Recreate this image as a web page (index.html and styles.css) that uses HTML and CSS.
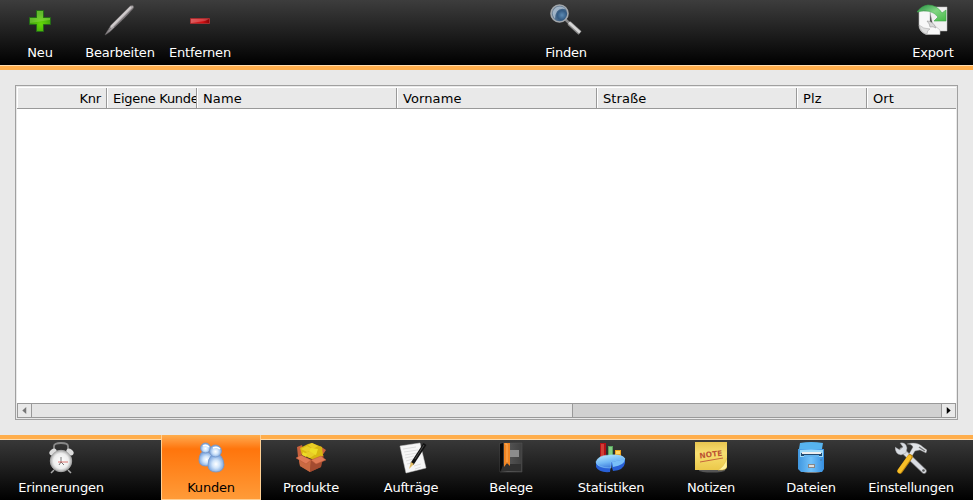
FILE: index.html
```html
<!DOCTYPE html>
<html lang="de">
<head>
<meta charset="utf-8">
<title>Kunden</title>
<link rel="stylesheet" href="styles.css">
</head>
<body>
<header class="toolbar">
  <button class="tool"><svg viewBox="0 0 32 32"><defs><radialGradient id="green" cx=".55" cy=".65"><stop stop-color="#65da08"/><stop offset="1" stop-color="#40a10c"/></radialGradient></defs><path d="M12.5 6.5h7v7h7v7h-7v7h-7v-7h-7v-7h7z" fill="url(#green)" stroke="#246b16"/><path d="M13 7h6v7h7v2l-20 3v-5h7z" fill="#b4ed78" opacity=".3"/></svg><span>Neu</span></button>
  <button class="tool"><svg viewBox="0 0 32 32"><path d="M1 31L7 21 26 2q3-2 4 1-1 3-20 21-5 5-9 7z" fill="#a8a4a6" stroke="#575456" stroke-width=".7"/><path d="M7 23L27 3" stroke="#d0cccd" stroke-width="1.8"/><path d="M2 30l5-6M10 23L29 4" stroke="#817b7e"/></svg><span>Bearbeiten</span></button>
  <button class="tool"><svg viewBox="0 0 32 32"><defs><linearGradient id="red"><stop stop-color="#d33132"/><stop offset=".65" stop-color="#d00c10"/><stop offset="1" stop-color="#850507"/></linearGradient></defs><path d="M6.5 14.5h19v5h-19z" fill="url(#red)" stroke="#a62c2e"/><path d="M7 15h18l-4 2-14 2z" fill="#fff" opacity=".22"/></svg><span>Entfernen</span></button>
  <button class="tool find"><svg viewBox="0 0 32 32"><defs><radialGradient id="lens" cx=".65" cy=".6" r=".6"><stop stop-color="#5d8bb4"/><stop offset=".45" stop-color="#345b83"/><stop offset="1" stop-color="#6c8296"/></radialGradient></defs><path d="M15 15l5 5" stroke="#888" stroke-width="2.5"/><path d="M19 19l11 10" stroke="#888" stroke-width="4.5"/><path d="M19 18.500l11 10" stroke="#d6d6d6" stroke-width="2.500"/><circle cx="9.500" cy="9.500" r="8.500" fill="url(#lens)" stroke="#a2a7ac" stroke-width="1.600"/><path d="M5 15Q0 8 6 3.500q6-3 10 2-6-2-9 2-2 3-2 7.500z" fill="#b9cad9" opacity=".75"/></svg><span>Finden</span></button>
  <button class="tool export"><svg viewBox="0 0 32 32"><defs><linearGradient id="arrow" x2="1" y2="1"><stop stop-color="#208b40"/><stop offset=".5" stop-color="#82d683"/><stop offset="1" stop-color="#46b847"/></linearGradient></defs><path d="M12 3h18v24H17z" fill="#f0f0f0" stroke="#bbb" stroke-width=".5"/><path d="M2 7h11v11l10 8v4.500H9q-7-3-7-9z" fill="#f8f8f8" stroke="#bbb" stroke-width=".6"/><path d="M10 17q6 0 9 7-3-2-6-1 0-3-3-6z" fill="#d8d8d8" stroke="#999" stroke-width=".6"/><path d="M2 21q2 8 8 9 0-4 3-5-7 0-11-4z" fill="#e0e0e0" stroke="#aaa" stroke-width=".6"/><path d="M0 8Q4 2 11 1q9 0 14 8l4-3v11H17l4-4Q14 4 0 8z" fill="url(#arrow)" stroke="#3eaa4b" stroke-width=".6"/></svg><span>Export</span></button>
</header>
<main class="content">
  <section class="table">
    <div class="head">
      <div class="col right">Knr</div><div class="col clip">Eigene Kunde</div><div class="col wide">Name</div><div class="col wide">Vorname</div><div class="col wide">Straße</div><div class="col plz">Plz</div><div class="col last">Ort</div>
    </div>
    <div class="rows"></div>
    <div class="scroll">
      <div class="step"><svg viewBox="0 0 5 8"><path d="M4.500 0v8L0 4z" fill="#777"/></svg></div>
      <div class="track"></div><div class="thumb"></div>
      <div class="step end"><svg viewBox="0 0 5 8"><path d="M.5 0v8L5 4z" fill="#000"/></svg></div>
    </div>
  </section>
</main>
<nav class="tabs">
  <a class="tab first"><svg viewBox="0 0 32 32"><defs><radialGradient id="clock"><stop stop-color="#fff"/><stop offset=".7" stop-color="#eee"/><stop offset="1" stop-color="#aaa"/></radialGradient></defs><path d="M9 8V4q0-3 7-3t7 3v4" fill="none" stroke="#888" stroke-width="1.8"/><path d="M9 28l-3 3m17-3l3 3" stroke="#aaa" stroke-width="1.5"/><ellipse cx="8" cy="10" rx="4" ry="2.8" transform="rotate(-38 8 10)" fill="#ddd"/><ellipse cx="25" cy="10" rx="4" ry="2.8" transform="rotate(38 25 10)" fill="#ddd"/><circle cx="16" cy="19" r="10.7" fill="url(#clock)" stroke="#aaa"/><path d="M16 15v5l3 3m-3-3l-2 3" fill="none" stroke="#777"/><path d="M13 20h10" stroke="#d65752" stroke-width=".8"/></svg><span>Erinnerungen</span></a>
  <a class="tab active"><svg viewBox="0 0 32 32"><defs><radialGradient id="person" cx=".5" cy=".55"><stop stop-color="#fff"/><stop offset=".45" stop-color="#d2e6fb"/><stop offset="1" stop-color="#7ea7df"/></radialGradient></defs><g fill="url(#person)" stroke="#7297cb" stroke-width=".8"><path d="M6 11q5-3 9 0 4 4 4 8-1 5-8 5-7 0-7-6 0-4 2-7z"/><circle cx="10.500" cy="6" r="5"/><path d="M16 14q5-3 10 0 3 4 3 9-1 7-8 7-8 0-8-7 0-6 3-9z"/><circle cx="20.500" cy="9" r="6"/></g><path d="M8 4q3-2 6 1M18 6q4-2 7 1" stroke="#fff" stroke-width="1.500" fill="none"/></svg><span>Kunden</span></a>
  <a class="tab"><svg viewBox="0 0 32 32"><path d="M3 13l14 5 12-5-3 12-11 5-10-6z" fill="#9c482c"/><path d="M3 13l13 5-1 12-10-6z" fill="#c96a42"/><path d="M16 18l11-5-1 12-11 5z" fill="#a34b30"/><path d="M2 5l5-2 2 8-6 4zM25 4l6 4-4 6z" fill="#c9613c"/><path d="M5 6l8-4 4-1 10 4 1 9-9 4-12-5z" fill="#d8b711"/><path d="M6 7l6-3 6 3-6 3zM13 3l4-2 6 3-5 3zM8 12l7-3 6 3-6 4z" fill="#e9cd27"/><path d="M14 9l2-3 7 1-2 6zM8 10l4 2-1 3-4-2z" fill="#eddd27"/><path d="M1 16l5-3 10 5-5 4zM16 18l10-4 5 4-10 4z" fill="#e07b57" stroke="#b95737" stroke-width=".5"/></svg><span>Produkte</span></a>
  <a class="tab"><svg viewBox="0 0 32 32"><path d="M5 4L25 1l6 25-20 5z" fill="#f6f6f6" stroke="#ccc" stroke-width=".5"/><path d="M8 7l13-2M9 10l14-2M10 13l12-2M10 16l9-2M11 19l7-2M12 22l5-1M19 24l7-2M20 27l6-2" stroke="#d2d2d2" stroke-width=".7"/><path d="M30 2L17 22" stroke="#111" stroke-width="3.500"/><path d="M29 3L20 17" stroke="#666" stroke-width=".7"/><path d="M16 20l3 2-5 5z" fill="#e1bb63"/></svg><span>Aufträge</span></a>
  <a class="tab"><svg viewBox="0 0 32 32"><defs><linearGradient id="book"><stop stop-color="#222"/><stop offset=".35" stop-color="#555"/><stop offset="1" stop-color="#3f3f3f"/></linearGradient></defs><path d="M5 1h22v29H5z" fill="url(#book)" stroke="#555" stroke-width=".5"/><path d="M5 2l3-1v23l-3 6z" fill="#090909"/><path d="M8 22h18v7H7z" fill="#303030"/><path d="M13 8h11v7H13z" fill="#8c8c8c"/><path d="M9 1h6v23l-3-3-3 4z" fill="#ef8524"/><path d="M10 2h2v18" stroke="#ffaf58" fill="none"/></svg><span>Belege</span></a>
  <a class="tab"><svg viewBox="0 0 32 32"><defs><linearGradient id="pie" y2="1" x2=".4"><stop stop-color="#bfeaff"/><stop offset=".6" stop-color="#72b8f5"/><stop offset="1" stop-color="#3d7bdd"/></linearGradient></defs><path d="M5 1h6v19H5z" fill="#b31118"/><path d="M6 2h3v15H6z" fill="#d03e35"/><path d="M13 4h5v14h-5z" fill="#59a35e"/><path d="M14 5h3v11h-3z" fill="#83ce83"/><path d="M20 8h6v9h-6z" fill="#f0a319"/><path d="M21 9h4v3h-4z" fill="#ffd565"/><path d="M1 19v6q3 6 14 5l1-8 2 7q11-1 12-8v-5z" fill="#2860d6"/><path d="M1 20Q3 13 15 13q13-1 15 4L16 20v6Q2 26 1 20z" fill="url(#pie)" stroke="#94d7ff" stroke-width=".5"/><path d="M17 20l13-3q0 6-12 8z" fill="#78bff8"/></svg><span>Statistiken</span></a>
  <a class="tab"><svg viewBox="0 0 32 32"><defs><linearGradient id="note" x2="0" y2="1"><stop stop-color="#e8c550"/><stop offset=".4" stop-color="#f8df71"/><stop offset="1" stop-color="#ebc84a"/></linearGradient></defs><ellipse cx="17" cy="28.500" rx="13" ry="2" fill="#555"/><path d="M0 0h32v23l-5 5H0z" fill="url(#note)"/><path d="M23 28q6-3 9-12v9q-1 3-5 3z" fill="#fff09b" stroke="#dcb940" stroke-width=".5"/><text x="4.500" y="15" transform="rotate(-7 16 13)" class="note-text">NOTE</text><path d="M5 20l23-4" stroke="#c6663d" stroke-width="1"/></svg><span>Notizen</span></a>
  <a class="tab"><svg viewBox="0 0 32 32"><defs><linearGradient id="drawer"><stop stop-color="#3f96df"/><stop offset=".5" stop-color="#72c2fa"/><stop offset="1" stop-color="#378fe0"/></linearGradient></defs><ellipse cx="17" cy="29" rx="10" ry="2" fill="#777"/><path d="M5 1Q16-1 28 1l-1 6H4z" fill="#57b4ef"/><path d="M3 7h26v20l-2 3H6l-3-3z" fill="url(#drawer)"/><path d="M5 8h23v7H5z" fill="#9cdafa"/><path d="M6 11h21v3H6z" fill="#234a70"/><path d="M7 10h19v2H7z" fill="#eee"/><path d="M9 13h15v2H9z" fill="#63b4ee"/><path d="M13 22h7v4h-7z" fill="#888"/><path d="M14 23h5v2h-5z" fill="#ddd"/><path d="M26 17v2" stroke="#4778a0"/></svg><span>Dateien</span></a>
  <a class="tab"><svg viewBox="0 0 32 32"><path d="M7 8l22 21" stroke="#777" stroke-width="5.500" stroke-linecap="round"/><path d="M7 8l22 21" stroke="#dadde3" stroke-width="4" stroke-linecap="round"/><path d="M0 5l5 3 3-3-3-4q6-1 7 5l-1 5-5 2Q0 12 0 5z" fill="#d8dce2" stroke="#888" stroke-width=".4"/><circle cx="28.500" cy="28.500" r="1.300" fill="#555"/><path d="M12 2q10-3 16 3l4 3-1 3-6-3-5 1-3 5-3-2 4-7q-1-3-6-3z" fill="#e2e4e8" stroke="#888" stroke-width=".4"/><path d="M24 5l6 4" stroke="#777" stroke-width="1.500"/><path d="M15 15L5 29" stroke="#bc850e" stroke-width="5.500" stroke-linecap="round"/><path d="M14.500 15L4.500 29" stroke="#f8bf28" stroke-width="4" stroke-linecap="round"/></svg><span>Einstellungen</span></a>
</nav>
</body>
</html>
```
FILE: styles.css
```css
* { box-sizing: border-box; }
body {
  margin: 0;
  width: 973px;
  height: 500px;
  display: flex;
  flex-direction: column;
  overflow: hidden;
  background: #e9e9e9;
  color: #000;
  font: 13px/16px "DejaVu Sans", sans-serif;
  letter-spacing: -0.2px;
}
svg { display: block; flex: none; }
.toolbar {
  height: 70px;
  flex: none;
  display: flex;
  background: linear-gradient(#3d3d3d, #000) 0 0 / 100% 65px no-repeat #ffae4c;
  border-bottom: 4px solid #ffae4c;
  box-shadow: inset 0 -1px #ffdcae;
}
.tool {
  width: 80px;
  padding: 4px 0 0;
  border: 0;
  background: none;
  color: #fff;
  font: inherit;
  letter-spacing: inherit;
  display: flex;
  flex-direction: column;
  align-items: center;
}
.tool svg, .tab svg { width: 32px; height: 32px; }
.tool span { margin-top: 9px; }
.find { margin-left: 286px; }
.export { margin-left: auto; }
.content { flex: 1; padding: 15px; }
.table {
  width: 943px;
  height: 335px;
  padding: 1px;
  border: 1px solid #a0a0a0;
  display: flex;
  flex-direction: column;
}
.head {
  height: 22px;
  flex: none;
  display: flex;
  letter-spacing: 0.1px;
  border-top: 1px solid #fff;
  border-bottom: 1px solid #999;
}
.col {
  width: 90px;
  flex: none;
  padding: 3px 0 0 5px;
  overflow: hidden;
  white-space: nowrap;
  border-left: 1px solid #fff;
  border-right: 1px solid #999;
}
.right { text-align: right; padding-right: 5px; letter-spacing: -0.2px; }
.clip { letter-spacing: -0.3px; }
.wide { width: 200px; }
.plz { width: 70px; }
.last { width: auto; flex: 1; border-right: 0; }
.rows { flex: 1; background: #fff; }
.scroll {
  height: 15px;
  flex: none;
  display: flex;
  border: 1px solid #999;
}
.step {
  width: 14px;
  display: flex;
  align-items: center;
  justify-content: center;
  border-right: 1px solid #999;
}
.step svg { width: 5px; height: 7px; }
.end { border-right: 0; border-left: 1px solid #999; }
.track { width: 540px; background: #e5e5e5; }
.thumb { flex: 1; background: #d1d1d1; border-left: 1px solid #999; }
.tabs {
  height: 65px;
  flex: none;
  display: flex;
  padding-left: 11px;
  border-top: 4px solid #ffae4c;
  box-shadow: inset 0 1px #ffdcae;
  background: linear-gradient(#393939, #000);
}
.tab {
  width: 100px;
  padding-top: 3px;
  color: #fff;
  display: flex;
  flex-direction: column;
  align-items: center;
}
.tab span { margin-top: 6px; }
.first { margin-right: 50px; }
.active {
  height: 65px;
  margin-top: -4px;
  padding-top: 7px;
  color: #000;
  border: 1px solid #ffcf93;
  border-top: 0;
  background: linear-gradient(#ffae4c 0, #ff9435 6px, #ff750c 14px, #ff9b38 100%);
}
.note-text {
  font: bold 7.5px "DejaVu Sans", sans-serif;
  letter-spacing: 0;
  fill: #bd5633;
}
```
